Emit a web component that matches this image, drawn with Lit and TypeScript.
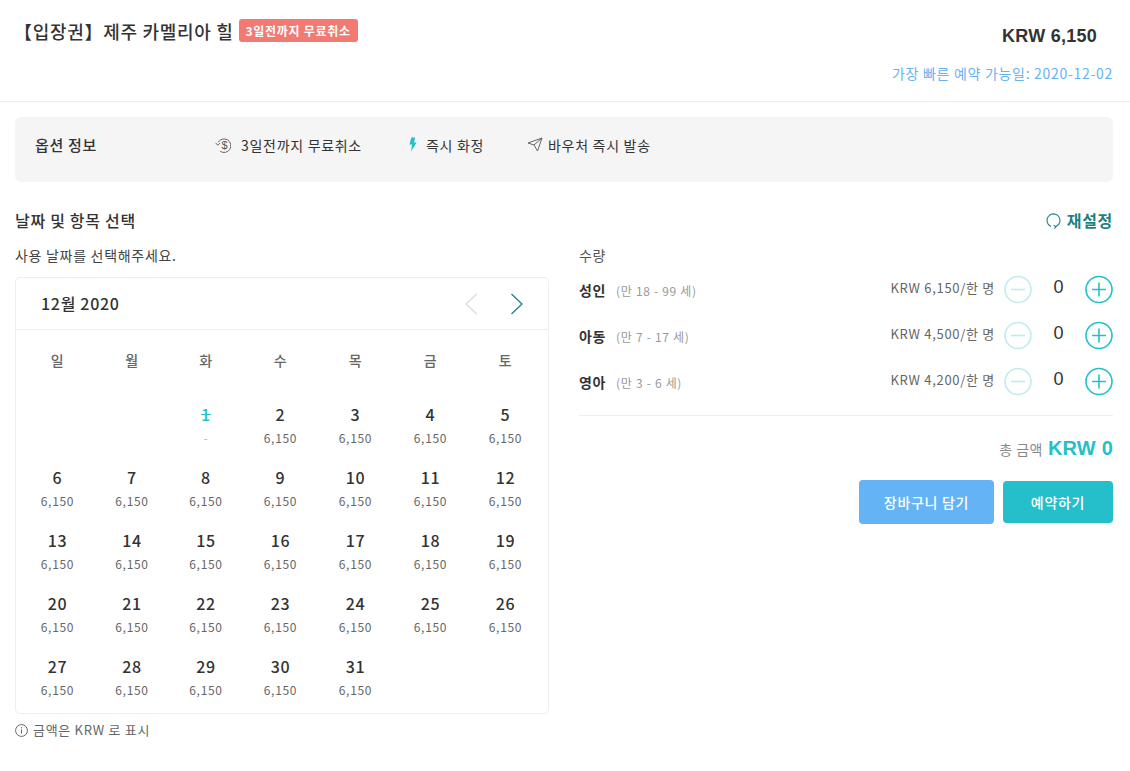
import { LitElement, html, css } from "lit";
import { customElement } from "lit/decorators.js";

const PRICE = "6,150";
const weekdays = ["일", "월", "화", "수", "목", "금", "토"];
const rows = [
  { name: "성인", age: "(만 18 - 99 세)", price: "KRW 6,150/한 명" },
  { name: "아동", age: "(만 7 - 17 세)", price: "KRW 4,500/한 명" },
  { name: "영아", age: "(만 3 - 6 세)", price: "KRW 4,200/한 명" },
];

@customElement("app-root")
export class AppRoot extends LitElement {
  static styles = css`
    :host {
      display: block;
      width: 1130px;
      height: 771px;
      background: #fff;
      overflow: hidden;
      color: #333;
      font-family: "Noto Sans CJK KR", "Noto Sans", sans-serif;
      font-size: 14px;
      letter-spacing: 0.7px;
    }
    * { box-sizing: border-box; }
    .head {
      height: 102px;
      border-bottom: 1px solid #eee;
      padding: 19px 17px 0 14px;
      display: flex;
      justify-content: space-between;
    }
    .title-line { display: flex; align-items: flex-start; gap: 5px; }
    .title { font-size: 18px; font-weight: 500; line-height: 24px; color: #333; }
    .badge {
      background: #f27a72;
      color: #fff;
      font-size: 12px;
      font-weight: 700;
      line-height: 23px;
      height: 23px;
      padding: 0 7px;
      border-radius: 3px;
    }
    .head-right { display: flex; flex-direction: column; align-items: flex-end; }
    .price {
      font-family: "Liberation Sans", Arial, sans-serif;
      font-weight: 700;
      font-size: 18px;
      line-height: 24px;
      letter-spacing: 0.25px;
      margin: 5px 16px 0 0;
    }
    .earliest { font-size: 14px; line-height: 20px; color: #64b3f4; margin-top: 15px; }
    .options {
      margin: 15px 17px 0 15px;
      height: 65px;
      background: #f5f5f5;
      border-radius: 6px;
      display: flex;
      align-items: center;
      padding: 0 0 10px 20px;
    }
    .opt-title { width: 180px; font-size: 15px; font-weight: 500; }
    .opt { display: flex; align-items: center; font-size: 14px; color: #333; }
    .opt svg { display: block; }
    .opt.a { width: 193px; gap: 10px; }
    .opt.b { width: 119px; gap: 9px; }
    .opt.c { gap: 5px; }
    .sec-head {
      margin: 26px 17px 0 15px;
      height: 24px;
      display: flex;
      align-items: center;
      justify-content: space-between;
    }
    .sec-title { font-size: 16px; font-weight: 500; color: #333; }
    .reset { display: flex; align-items: center; gap: 5px; font-size: 16px; font-weight: 700; color: #1f7f84; }
    .cols { display: flex; margin: 11px 17px 0 15px; gap: 30px; }
    .left { width: 534px; flex: none; }
    .right { flex: 1; min-width: 0; }
    .hint { font-size: 14px; line-height: 20px; margin-top: 2px; color: #444; }
    .cal {
      margin-top: 12px;
      width: 534px;
      height: 437px;
      border: 1px solid #eee;
      border-radius: 5px;
    }
    .cal-head {
      height: 52px;
      border-bottom: 1px solid #eee;
      display: flex;
      align-items: center;
      justify-content: space-between;
      padding: 0 24px 0 25px;
    }
    .month { font-size: 16px; font-weight: 500; color: #333; padding-bottom: 2px; }
    .nav { display: flex; gap: 32px; }
    .nav svg { display: block; }
    .grid, .weeks {
      display: grid;
      grid-template-columns: 75px 74px 74px 75px 75px 75px 75px;
      padding-left: 4px;
    }
    .grid { grid-auto-rows: 63px; }
    .weeks { height: 63px; }
    .wd {
      height: 54px;
      display: flex;
      align-items: center;
      justify-content: center;
      font-size: 14px;
      font-weight: 500;
      color: #666;
      padding-top: 5px;
    }
    .day { text-align: center; }
    .day b { display: block; font-size: 16px; font-weight: 500; line-height: 24px; color: #333; margin-top: 9px; }
    .day span { display: block; font-size: 12px; line-height: 18px; color: #666; margin-top: 3px; }
    .day.off b { color: #25bfcb; text-decoration: line-through; }
    .day.off span { color: #bbb; }
    .note { display: flex; align-items: center; gap: 5px; margin-top: 6px; font-size: 13px; line-height: 20px; color: #666; }
    .qty-label { font-size: 14px; line-height: 20px; margin-top: 2px; color: #555; }
    .qty { display: flex; flex-direction: column; gap: 18px; margin-top: 11px; padding-bottom: 19px; border-bottom: 1px solid #eee; }
    .row { display: flex; align-items: center; height: 28px; }
    .row .name { font-size: 14px; font-weight: 700; color: #333; width: 37px; }
    .row .age { font-size: 12px; color: #999; flex: 1; }
    .row .unit { font-size: 13px; color: #666; margin-right: 9px; position: relative; top: -3px; }
    .row svg { display: block; flex: none; position: relative; top: -1px; }
    .count {
      width: 53px;
      text-align: center;
      font-family: "Liberation Sans", Arial, sans-serif;
      font-size: 18px;
      letter-spacing: 0;
      color: #333;
      position: relative;
      top: -3px;
    }
    .total { display: flex; justify-content: flex-end; align-items: baseline; gap: 5px; margin-top: 18px; line-height: 28px; color: #888; font-size: 14px; letter-spacing: 0.5px; }
    .total b { font-family: "Liberation Sans", Arial, sans-serif; font-size: 20px; font-weight: 700; color: #25bfcb; letter-spacing: 0.2px; }
    .btns { display: flex; justify-content: flex-end; align-items: center; gap: 9px; margin-top: 17px; }
    .btn { display: flex; align-items: center; justify-content: center; color: #fff; font-size: 14px; font-weight: 500; border-radius: 4px; }
    .btn.cart { width: 135px; height: 44px; background: #64b3f4; }
    .btn.book { width: 110px; height: 42px; background: #25bfcb; }
  `;

  private minus() {
    return html`<svg width="28" height="29" viewBox="0 0 28 29" fill="none" stroke="#bfecef" stroke-width="1.6"><circle cx="14" cy="14.5" r="13"/><path d="M7 14.5h14"/></svg>`;
  }
  private plus() {
    return html`<svg width="28" height="29" viewBox="0 0 28 29" fill="none" stroke="#25bfcb" stroke-width="1.6"><circle cx="14" cy="14.5" r="13"/><path d="M7 14.5h14M14 7.5v14"/></svg>`;
  }
  private day(n: number) {
    return html`<div class="day ${n === 1 ? "off" : ""}"><b>${n}</b><span>${n === 1 ? "-" : PRICE}</span></div>`;
  }

  render() {
    const cells: unknown[] = [html`<div></div>`, html`<div></div>`];
    for (let i = 1; i <= 31; i++) cells.push(this.day(i));
    return html`
      <div class="head">
        <div class="title-line">
          <div class="title">【입장권】제주 카멜리아 힐</div>
          <div class="badge">3일전까지 무료취소</div>
        </div>
        <div class="head-right">
          <div class="price">KRW 6,150</div>
          <div class="earliest">가장 빠른 예약 가능일: 2020-12-02</div>
        </div>
      </div>
      <div class="options">
        <div class="opt-title">옵션 정보</div>
        <div class="opt a">
          <svg width="16" height="16" viewBox="0 0 16 16" fill="none" stroke="#666" stroke-width="1">
            <path d="M3.1 5.4A6.8 6.8 0 1 1 5.2 14.3"/>
            <path d="M0.5 6l2.4 2.2 2.2-2.2" />
            <text x="6.4" y="12.2" font-size="11" font-family="Liberation Sans" letter-spacing="0" fill="#555" stroke="none">$</text>
          </svg>
          3일전까지 무료취소
        </div>
        <div class="opt b">
          <svg width="9" height="15" viewBox="0 0 9 15"><path d="M3.2 0.5H7.2L6 5.5H8.5L3.2 14.5L4 7.5H1.5Z" fill="#25bfcb"/></svg>
          즉시 화정
        </div>
        <div class="opt c">
          <svg width="16" height="15" viewBox="0 0 16 15" fill="none" stroke="#666" stroke-width="1" stroke-linejoin="round">
            <path d="M1 6L15 1L10.5 14L7 8Z"/><path d="M7 8L15 1"/>
          </svg>
          바우처 즉시 발송
        </div>
      </div>
      <div class="sec-head">
        <div class="sec-title">날짜 및 항목 선택</div>
        <div class="reset">
          <svg width="17" height="17" viewBox="0 0 17 17" fill="none" stroke="#1f7f84" stroke-width="1.1">
            <path d="M6 14.6A6.6 6.6 0 1 1 11 14.6"/><path d="M8.6 13.2l2.4 1.4-1.6 2"/>
          </svg>
          재설정
        </div>
      </div>
      <div class="cols">
        <div class="left">
          <div class="hint">사용 날짜를 선택해주세요.</div>
          <div class="cal">
            <div class="cal-head">
              <div class="month">12월 2020</div>
              <div class="nav">
                <svg width="14" height="22" viewBox="0 0 14 22" fill="none" stroke="#d8dcdc" stroke-width="1.3"><path d="M12.5 1L2 11L12.5 21"/></svg>
                <svg width="14" height="22" viewBox="0 0 14 22" fill="none" stroke="#1f7f84" stroke-width="1.3"><path d="M1.5 1L12 11L1.5 21"/></svg>
              </div>
            </div>
            <div class="weeks">${weekdays.map((w) => html`<div class="wd">${w}</div>`)}</div>
            <div class="grid">${cells}</div>
          </div>
          <div class="note">
            <svg width="13" height="13" viewBox="0 0 13 13" fill="none" stroke="#666"><circle cx="6.5" cy="6.5" r="5.9"/><path d="M6.5 5.5v4M6.5 3.2v1.2"/></svg>
            금액은 KRW 로 표시
          </div>
        </div>
        <div class="right">
          <div class="qty-label">수량</div>
          <div class="qty">
            ${rows.map(
              (r) => html`<div class="row">
                <span class="name">${r.name}</span>
                <span class="age">${r.age}</span>
                <span class="unit">${r.price}</span>
                ${this.minus()}
                <span class="count">0</span>
                ${this.plus()}
              </div>`
            )}
          </div>
          <div class="total">총 금액 <b>KRW 0</b></div>
          <div class="btns">
            <div class="btn cart">장바구니 담기</div>
            <div class="btn book">예약하기</div>
          </div>
        </div>
      </div>
    `;
  }
}
